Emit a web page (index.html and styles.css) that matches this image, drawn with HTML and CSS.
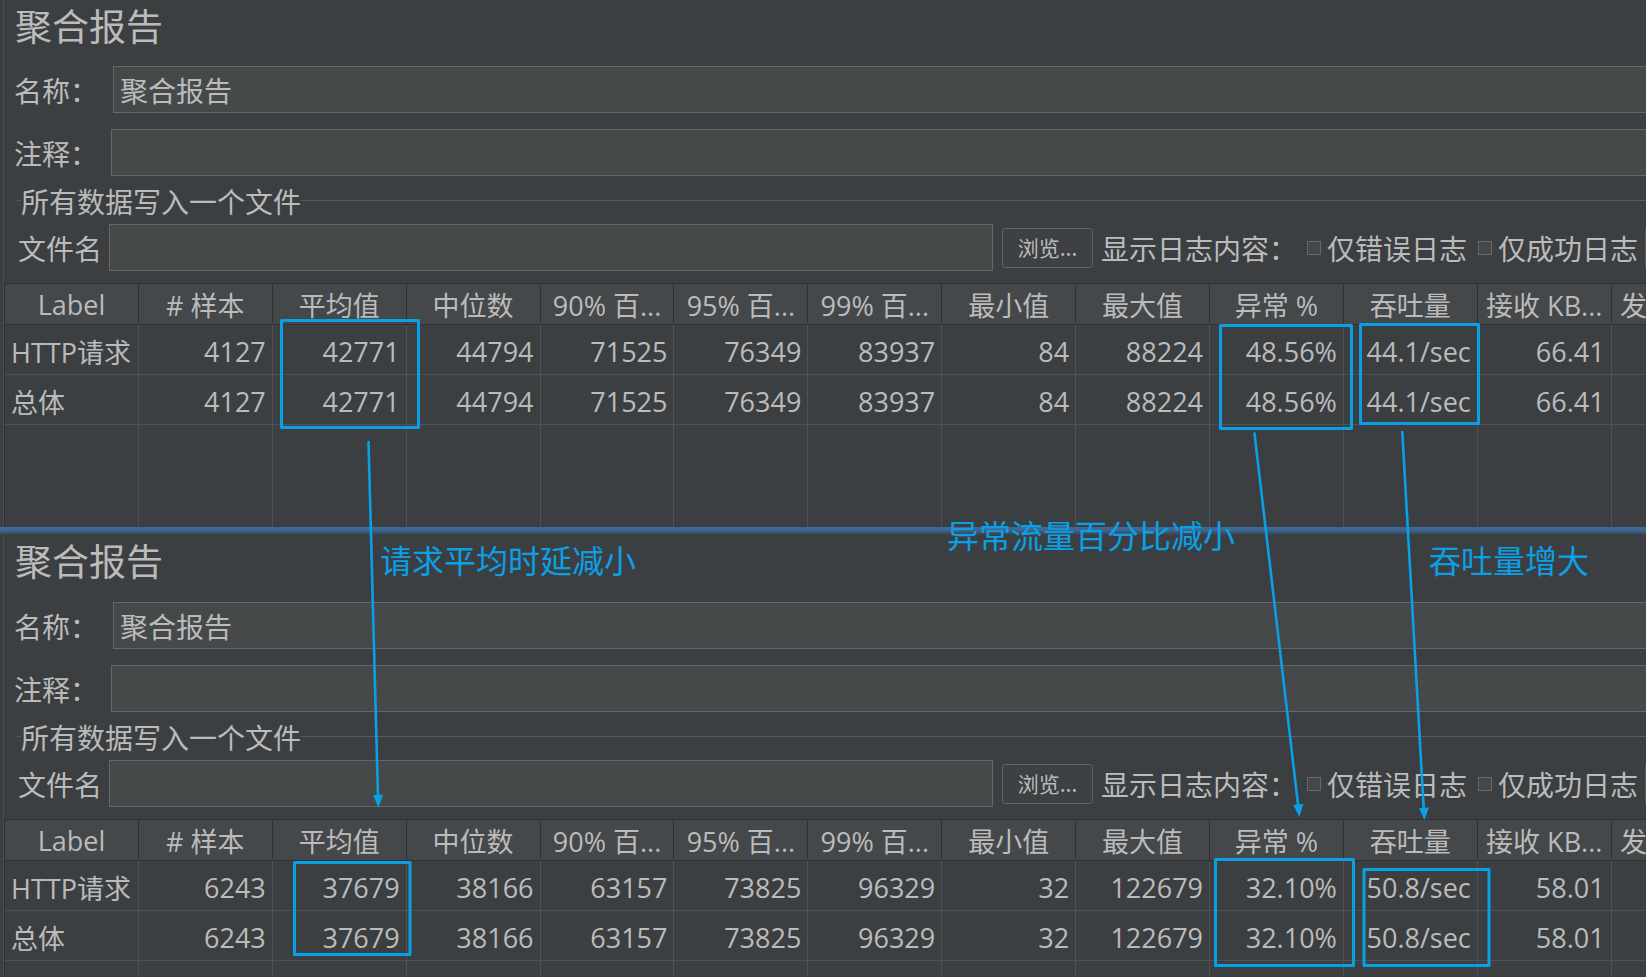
FILE: index.html
```html
<!DOCTYPE html>
<html lang="zh-CN">
<head>
<meta charset="utf-8">
<title>聚合报告</title>
<link rel="stylesheet" href="styles.css">
</head>
<body>
<div class="page">

  <section class="panel panel-first">
    <h1 class="title">聚合报告</h1>
    <div class="field field-name"><label class="lbl lbl-name">名称：</label><div class="input"><span>聚合报告</span></div></div>
    <div class="field field-comment"><label class="lbl lbl-comment">注释：</label><div class="input"></div></div>
    <div class="group-head"><span class="group-title">所有数据写入一个文件</span></div>
    <div class="file-row">
      <span class="lbl lbl-file">文件名</span>
      <div class="input file-input"></div>
      <button class="btn">浏览...</button>
      <span class="lbl lbl-log">显示日志内容：</span>
      <span class="check"></span><span class="lbl chk-lbl">仅错误日志</span>
      <span class="check"></span><span class="lbl chk-lbl chk-lbl-2">仅成功日志</span>
      <span class="edge-btn"></span>
    </div>
    <div class="table">
      <div class="th">Label</div><div class="th"># 样本</div><div class="th">平均值</div><div class="th">中位数</div><div class="th">90% 百...</div><div class="th">95% 百...</div><div class="th">99% 百...</div><div class="th">最小值</div><div class="th">最大值</div><div class="th">异常 %</div><div class="th">吞吐量</div><div class="th">接收 KB...</div><div class="th">发送 KB...</div>
      <div class="td lab">HTTP请求</div><div class="td">4127</div><div class="td">42771</div><div class="td">44794</div><div class="td">71525</div><div class="td">76349</div><div class="td">83937</div><div class="td">84</div><div class="td">88224</div><div class="td">48.56%</div><div class="td">44.1/sec</div><div class="td">66.41</div><div class="td">10.35</div>
      <div class="td lab">总体</div><div class="td">4127</div><div class="td">42771</div><div class="td">44794</div><div class="td">71525</div><div class="td">76349</div><div class="td">83937</div><div class="td">84</div><div class="td">88224</div><div class="td">48.56%</div><div class="td">44.1/sec</div><div class="td">66.41</div><div class="td">10.35</div>
      <div class="fill"></div><div class="fill"></div><div class="fill"></div><div class="fill"></div><div class="fill"></div><div class="fill"></div><div class="fill"></div><div class="fill"></div><div class="fill"></div><div class="fill"></div><div class="fill"></div><div class="fill"></div><div class="fill"></div>
    </div>
  </section>

  <section class="panel">
    <div class="divider"></div>
    <h1 class="title">聚合报告</h1>
    <div class="field field-name"><label class="lbl lbl-name">名称：</label><div class="input"><span>聚合报告</span></div></div>
    <div class="field field-comment"><label class="lbl lbl-comment">注释：</label><div class="input"></div></div>
    <div class="group-head"><span class="group-title">所有数据写入一个文件</span></div>
    <div class="file-row">
      <span class="lbl lbl-file">文件名</span>
      <div class="input file-input"></div>
      <button class="btn">浏览...</button>
      <span class="lbl lbl-log">显示日志内容：</span>
      <span class="check"></span><span class="lbl chk-lbl">仅错误日志</span>
      <span class="check"></span><span class="lbl chk-lbl chk-lbl-2">仅成功日志</span>
      <span class="edge-btn"></span>
    </div>
    <div class="table">
      <div class="th">Label</div><div class="th"># 样本</div><div class="th">平均值</div><div class="th">中位数</div><div class="th">90% 百...</div><div class="th">95% 百...</div><div class="th">99% 百...</div><div class="th">最小值</div><div class="th">最大值</div><div class="th">异常 %</div><div class="th">吞吐量</div><div class="th">接收 KB...</div><div class="th">发送 KB...</div>
      <div class="td lab">HTTP请求</div><div class="td">6243</div><div class="td">37679</div><div class="td">38166</div><div class="td">63157</div><div class="td">73825</div><div class="td">96329</div><div class="td">32</div><div class="td">122679</div><div class="td">32.10%</div><div class="td">50.8/sec</div><div class="td">58.01</div><div class="td">11.92</div>
      <div class="td lab">总体</div><div class="td">6243</div><div class="td">37679</div><div class="td">38166</div><div class="td">63157</div><div class="td">73825</div><div class="td">96329</div><div class="td">32</div><div class="td">122679</div><div class="td">32.10%</div><div class="td">50.8/sec</div><div class="td">58.01</div><div class="td">11.92</div>
      <div class="fill"></div><div class="fill"></div><div class="fill"></div><div class="fill"></div><div class="fill"></div><div class="fill"></div><div class="fill"></div><div class="fill"></div><div class="fill"></div><div class="fill"></div><div class="fill"></div><div class="fill"></div><div class="fill"></div>
    </div>
  </section>

  <svg class="overlay" width="1646" height="977" viewBox="0 0 1646 977" xmlns="http://www.w3.org/2000/svg">
    <g fill="none" stroke="#0aa0e6" stroke-width="3" stroke-linejoin="round">
      <rect x="281.5" y="320.5" width="137" height="107"/>
      <rect x="1220.5" y="325.5" width="131" height="103"/>
      <rect x="1360.5" y="324.5" width="118" height="99"/>
      <rect x="294.5" y="862.5" width="115.5" height="92"/>
      <rect x="1215.5" y="859.5" width="138" height="106"/>
      <rect x="1364" y="869.5" width="125" height="96"/>
    </g>
    <g stroke="#0aa0e6" stroke-width="2.6" stroke-linecap="round">
      <line x1="368.5" y1="442" x2="378" y2="797"/>
      <line x1="1254.5" y1="433.5" x2="1298.2" y2="806"/>
      <line x1="1402.3" y1="432" x2="1423.8" y2="810"/>
    </g>
    <g fill="#0aa0e6">
      <polygon points="378.3,807.5 383.2,794.8 373.2,795.1"/>
      <polygon points="1299.4,817 1303.4,803.8 1293.4,805"/>
      <polygon points="1424.4,820 1429,807.5 1419,808.2"/>
    </g>
  </svg>

  <div class="note note-avg">请求平均时延减小</div>
  <div class="note note-err">异常流量百分比减小</div>
  <div class="note note-tps">吞吐量增大</div>
</div>
</body>
</html>
```

FILE: styles.css
```css
* {
  box-sizing: border-box;
  margin: 0;
  padding: 0;
}

html, body {
  background: #3c3f41;
}

body {
  margin: 0;
  overflow: hidden;
}

.page {
  position: relative;
  width: 1646px;
  height: 977px;
  overflow: hidden;
  background: #3c3f41;
  color: #bbbbbb;
  font-family: "Noto Sans CJK SC", sans-serif;
}

.panel {
  height: 536px;
  margin-left: 3px;
  border-left: 1px solid #4b4e51;
  display: flex;
  flex-direction: column;
  flex: none;
}

.panel-first {
  height: 527px;
}

.divider {
  height: 8px;
  flex: none;
  margin-left: -4px;
  margin-right: -10px;
  background: linear-gradient(#3c6999 0px, #3c6999 3px, #3c3f41 8px);
}

.title {
  height: 51px;
  flex: none;
  line-height: 51px;
  font-size: 37px;
  font-weight: normal;
  margin-left: 11px;
  color: #bbbbbb;
}

.panel-first .title {
  height: 50px;
  line-height: 51px;
}

.lbl {
  font-size: 28px;
  color: #bbbbbb;
  white-space: nowrap;
  flex: none;
}

.field {
  display: flex;
  align-items: center;
  height: 47px;
  flex: none;
  margin-top: 16px;
  margin-left: 10px;
}

.lbl-name {
  width: 99px;
}

.lbl-comment {
  width: 97px;
}

.input {
  flex: 1;
  height: 47px;
  background: #45494a;
  border: 1px solid #666666;
  margin-right: -20px;
  display: flex;
  align-items: center;
  padding-left: 6px;
  font-size: 28px;
  color: #bbbbbb;
}

.group-head {
  display: flex;
  align-items: center;
  height: 30px;
  flex: none;
  margin-top: 10px;
  margin-left: 13px;
  margin-right: -10px;
}

.group-head::before,
.group-head::after {
  content: "";
  height: 1px;
  background: #595c5e;
  transform: translateY(-1px);
}

.group-head::before {
  width: 4px;
  flex: none;
}

.group-head::after {
  flex: 1;
}

.group-title {
  font-size: 28px;
  line-height: 30px;
  white-space: nowrap;
}

.file-row {
  display: flex;
  align-items: center;
  height: 47px;
  flex: none;
  margin-top: 8px;
  margin-left: 14px;
}

.lbl-file {
  width: 91px;
}

.file-input {
  flex: none;
  width: 884px;
  margin-right: 0;
}

.btn {
  flex: none;
  width: 91px;
  height: 40px;
  margin-left: 9px;
  border: 1px solid #5f6264;
  border-radius: 3px;
  background: #3e4143;
  color: #bbbbbb;
  font-family: "Noto Sans CJK SC", sans-serif;
  font-size: 21px;
  line-height: 1;
}

.lbl-log {
  width: 206px;
  margin-left: 8px;
}

.check {
  width: 14px;
  height: 14px;
  flex: none;
  border: 1px solid #66696b;
  background: #43474a;
  margin-right: 6px;
}

.chk-lbl {
  width: 151px;
}

.chk-lbl-2 {
  width: 147px;
}

.edge-btn {
  flex: none;
  width: 30px;
  height: 42px;
  border: 1px solid #5f6264;
  border-radius: 3px;
}

.table {
  display: grid;
  grid-template-columns: repeat(13, 133.9px);
  grid-template-rows: 42px 50px 50px 102px;
  margin-top: 12px;
  border-left: 1px solid #2f3133;
  width: max-content;
  flex: none;
  font-family: "Open Sans", "Noto Sans CJK SC", sans-serif;
  font-size: 27px;
  color: #bbbbbb;
}

.th {
  background: #45484a;
  border-top: 1px solid #2f3133;
  border-right: 1px solid #2f3133;
  border-bottom: 1px solid #2f3133;
  display: flex;
  align-items: center;
  justify-content: center;
  padding-top: 1px;
  white-space: nowrap;
  overflow: hidden;
}

.td {
  border-right: 1px solid #4f5254;
  border-bottom: 1px solid #4f5254;
  display: flex;
  align-items: center;
  justify-content: flex-end;
  padding-right: 6px;
  padding-top: 3px;
  white-space: nowrap;
}

.td.lab {
  justify-content: flex-start;
  padding-left: 6px;
  padding-right: 0;
}

.fill {
  border-right: 1px solid #4f5254;
}

.overlay {
  position: absolute;
  left: 0;
  top: 0;
  pointer-events: none;
}

.note {
  position: absolute;
  font-family: "Noto Sans CJK SC", sans-serif;
  font-size: 32px;
  font-weight: normal;
  line-height: 32px;
  color: #0aa0e6;
  white-space: nowrap;
}

.note-avg {
  left: 380px;
  top: 543px;
}

.note-err {
  left: 947px;
  top: 518px;
}

.note-tps {
  left: 1429px;
  top: 543px;
}
```
